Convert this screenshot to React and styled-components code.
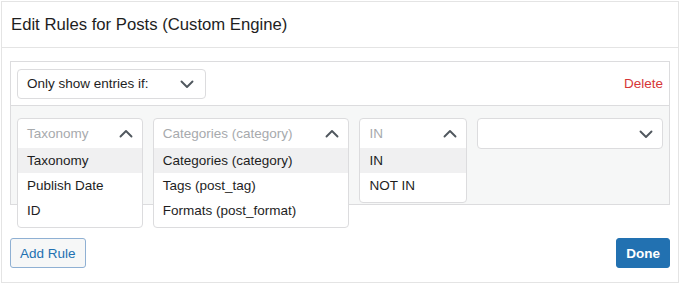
import React from "react";
import styled, { createGlobalStyle } from "styled-components";

const GlobalStyle = createGlobalStyle`
  html, body {
    margin: 0;
    padding: 0;
    background: #ffffff;
    font-family: "Liberation Sans", Arial, sans-serif;
  }
`;

const Chevron = ({ up }) => (
  <svg width="14" height="14" viewBox="0 0 14 14" fill="none">
    <path
      d={up ? "M1.5 9.5L7 4L12.5 9.5" : "M1.5 4.5L7 10L12.5 4.5"}
      stroke="#50575e"
      strokeWidth="1.9"
      strokeLinecap="round"
      strokeLinejoin="round"
    />
  </svg>
);

const conditions = [
  { width: 126, value: "Taxonomy", options: ["Taxonomy", "Publish Date", "ID"] },
  {
    width: 197,
    value: "Categories (category)",
    options: ["Categories (category)", "Tags (post_tag)", "Formats (post_format)"],
  },
  { width: 108, value: "IN", options: ["IN", "NOT IN"] },
];

const App = () => {
  return (
    <>
      <GlobalStyle />
      <Modal>
        <Header>
          <Title>Edit Rules for Posts (Custom Engine)</Title>
        </Header>
        <Body>
          <RuleBox>
            <RuleTop>
              <TypeSelect>
                <span>Only show entries if:</span>
                <Chevron />
              </TypeSelect>
              <DeleteLink>Delete</DeleteLink>
            </RuleTop>
            <RuleRow>
              {conditions.map((c) => (
                <Field key={c.value} $width={c.width}>
                  <Menu>
                    <Control>
                      <Placeholder>{c.value}</Placeholder>
                      <Chevron up />
                    </Control>
                    <Options>
                      {c.options.map((o, i) => (
                        <Option key={o} $active={i === 0}>
                          {o}
                        </Option>
                      ))}
                    </Options>
                  </Menu>
                </Field>
              ))}
              <Field $width={186}>
                <Menu>
                  <Control>
                    <Placeholder />
                    <Chevron />
                  </Control>
                </Menu>
              </Field>
            </RuleRow>
          </RuleBox>
          <Footer>
            <Button>Add Rule</Button>
            <Button primary>Done</Button>
          </Footer>
        </Body>
      </Modal>
    </>
  );
};

export default App;

// Styled Components

const Modal = styled.div`
  margin: 1px 0 0 1px;
  width: 676px;
  height: 280px;
  border: 1px solid #e4e4e4;
  background: #fff;
  display: flex;
  flex-direction: column;
`;

const Header = styled.div`
  height: 45px;
  border-bottom: 1px solid #e4e4e4;
  display: flex;
  align-items: center;
  padding: 0 9px;
`;

const Title = styled.h1`
  margin: 0;
  font-size: 16.7px;
  font-weight: 400;
  color: #1e1e1e;
`;

const Body = styled.div`
  padding: 13px 8px 0 8px;
  display: flex;
  flex-direction: column;
`;

const RuleBox = styled.div`
  border: 1px solid #dcdcde;
`;

const RuleTop = styled.div`
  height: 43px;
  padding: 0 6px;
  display: flex;
  align-items: center;
  justify-content: space-between;
  border-bottom: 1px solid #dcdcde;
  background: #fff;
`;

const TypeSelect = styled.div`
  width: 189px;
  height: 30px;
  box-sizing: border-box;
  border: 1px solid #dcdcde;
  border-radius: 4px;
  display: flex;
  align-items: center;
  justify-content: space-between;
  padding: 0 11px 0 9px;
  font-size: 13.5px;
  color: #1e1e1e;
`;

const DeleteLink = styled.span`
  font-size: 13.5px;
  color: #d63638;
`;

const RuleRow = styled.div`
  height: 98px;
  box-sizing: border-box;
  background: #f6f7f7;
  padding: 12px 6px;
  display: flex;
  gap: 10px;
`;

const Field = styled.div`
  position: relative;
  width: ${({ $width }) => $width}px;
  height: 30px;
`;

const Menu = styled.div`
  position: absolute;
  top: 0;
  left: 0;
  right: 0;
  z-index: 2;
  background: #fff;
  border: 1px solid #dcdcde;
  border-radius: 4px;
`;

const Control = styled.div`
  height: 29px;
  display: flex;
  align-items: center;
  justify-content: space-between;
  padding: 0 9px 0 9px;
`;

const Placeholder = styled.span`
  font-size: 13.5px;
  color: #a7aaad;
`;

const Options = styled.div`
  padding-bottom: 4px;
`;

const Option = styled.div`
  height: 25px;
  display: flex;
  align-items: center;
  padding: 0 9px;
  font-size: 13.5px;
  color: #1e1e1e;
  background: ${({ $active }) => ($active ? "#f0f0f1" : "#fff")};
`;

const Footer = styled.div`
  margin-top: 33px;
  display: flex;
  justify-content: space-between;
`;

const Button = styled.button`
  height: 30px;
  padding: 0 9px;
  border-radius: 3px;
  font-family: inherit;
  font-size: 13.5px;
  font-weight: ${({ primary }) => (primary ? 700 : 400)};
  border: 1px solid ${({ primary }) => (primary ? "#2271b1" : "#8fb0d3")};
  background: ${({ primary }) => (primary ? "#2271b1" : "#f6f7f7")};
  color: ${({ primary }) => (primary ? "#fff" : "#2271b1")};
  cursor: pointer;
`;
